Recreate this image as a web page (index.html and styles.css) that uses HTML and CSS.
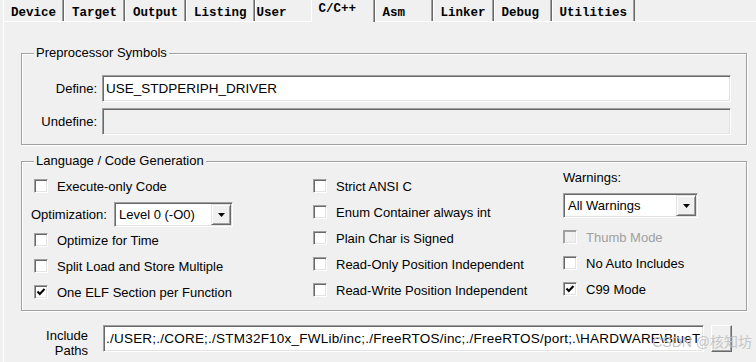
FILE: index.html
```html
<!DOCTYPE html>
<html>
<head>
<meta charset="utf-8">
<link rel="stylesheet" href="styles.css">
</head>
<body>
<div class="dialog">
  <div class="tabs">
    <div class="tab">Device</div>
    <div class="tab">Target</div>
    <div class="tab">Output</div>
    <div class="tab">Listing</div>
    <div class="tab tab-user">User</div>
    <div class="tab active">C/C++</div>
    <div class="tab">Asm</div>
    <div class="tab">Linker</div>
    <div class="tab">Debug</div>
    <div class="tab">Utilities</div>
  </div>
  <div class="page">
    <fieldset class="group pre">
      <legend>Preprocessor Symbols</legend>
      <div class="pre-grid">
        <div class="fl">Define:</div>
        <div class="edit">USE_STDPERIPH_DRIVER</div>
        <div class="fl">Undefine:</div>
        <div class="edit disabled"></div>
      </div>
    </fieldset>
    <fieldset class="group lang">
      <legend>Language / Code Generation</legend>
      <div class="cols">
        <div class="col c1">
          <div class="cb"><span class="box"></span><span>Execute-only Code</span></div>
          <div class="opt-row">
            <span class="opt-label">Optimization:</span>
            <div class="combo opt-combo">
              <span class="val">Level 0 (-O0)</span>
              <span class="drop"><svg width="7" height="4" viewBox="0 0 7 4"><polygon points="0,0 7,0 3.5,4" fill="#000"/></svg></span>
            </div>
          </div>
          <div class="cb"><span class="box"></span><span>Optimize for Time</span></div>
          <div class="cb"><span class="box"></span><span>Split Load and Store Multiple</span></div>
          <div class="cb"><span class="box"><svg width="12" height="12" viewBox="0 0 12 12"><polyline points="2.5,5.5 4.8,8 9.5,3" fill="none" stroke="#000" stroke-width="2"/></svg></span><span>One ELF Section per Function</span></div>
        </div>
        <div class="col c2">
          <div class="cb"><span class="box"></span><span>Strict ANSI C</span></div>
          <div class="cb"><span class="box"></span><span>Enum Container always int</span></div>
          <div class="cb"><span class="box"></span><span>Plain Char is Signed</span></div>
          <div class="cb"><span class="box"></span><span>Read-Only Position Independent</span></div>
          <div class="cb"><span class="box"></span><span>Read-Write Position Independent</span></div>
        </div>
        <div class="col c3">
          <div class="warn-label">Warnings:</div>
          <div class="combo warn-combo">
            <span class="val">All Warnings</span>
            <span class="drop"><svg width="7" height="4" viewBox="0 0 7 4"><polygon points="0,0 7,0 3.5,4" fill="#000"/></svg></span>
          </div>
          <div class="c3-checks">
            <div class="cb disabled"><span class="box"></span><span>Thumb Mode</span></div>
            <div class="cb"><span class="box"></span><span>No Auto Includes</span></div>
            <div class="cb"><span class="box"><svg width="12" height="12" viewBox="0 0 12 12"><polyline points="2.5,5.5 4.8,8 9.5,3" fill="none" stroke="#000" stroke-width="2"/></svg></span><span>C99 Mode</span></div>
          </div>
        </div>
      </div>
    </fieldset>
    <div class="inc-row">
      <div class="inc-label">Include<br>Paths</div>
      <div class="edit inc">./USER;./CORE;./STM32F10x_FWLib/inc;./FreeRTOS/inc;./FreeRTOS/port;.\HARDWARE\BlueT</div>
      <div class="btn"></div>
    </div>
  </div>
  <div class="watermark">CSDN @核知坊</div>
</div>
</body>
</html>
```
FILE: styles.css
```css
* { box-sizing: border-box; }
html, body { margin: 0; padding: 0; }
body {
  width: 756px;
  height: 362px;
  overflow: hidden;
  background: #f0f0f0;
  font-family: "Liberation Sans", Arial, sans-serif;
  font-size: 13px;
  color: #000;
}
.dialog { position: relative; width: 756px; height: 362px; }

/* tabs */
.tabs { display: flex; height: 21px; padding-left: 3px; }
.tab {
  height: 21px;
  min-width: 58px;
  padding: 7px 7px 0;
  border-left: 1px solid #fff;
  border-right: 1px solid #696969;
  box-shadow: inset -1px 0 #a0a0a0;
  font-family: "Liberation Mono", "Courier New", monospace;
  font-weight: bold;
  font-size: 12.5px;
  line-height: 13px;
  white-space: nowrap;
  background: #f0f0f0;
}
.tab-user { padding-left: 1px; }
.tab.active {
  position: relative;
  z-index: 1;
  height: 22px;
  min-width: 64px;
  margin-left: -2px;
  padding-top: 3px;
}

/* page */
.page {
  margin-left: 3px;
  height: 341px;
  border-top: 1px solid #fff;
  border-left: 1px solid #fff;
  padding: 23px 9px 0 0;
}
.group {
  margin: 0 0 0 17px;
  padding: 0;
  min-width: 0;
  border: 1px solid #a0a0a0;
  box-shadow: inset 1px 1px #fff, 1px 1px #fff;
}
.group legend {
  margin-left: 12px;
  padding: 0 2px;
  line-height: 16px;
  background: #f0f0f0;
}
.pre-grid {
  display: grid;
  grid-template-columns: 75px 1fr;
  column-gap: 5px;
  row-gap: 6px;
  align-items: center;
  padding: 14px 15px 9px 0;
}
.fl { text-align: right; }
.edit {
  height: 27px;
  background: #fff;
  border: 1px solid;
  border-color: #a0a0a0 #fff #fff #a0a0a0;
  box-shadow: inset 1px 1px #696969, inset -1px -1px #e3e3e3;
  padding: 0 3px;
  font-size: 13.5px;
  line-height: 25px;
  white-space: nowrap;
  overflow: hidden;
}
.edit.disabled { background: #f0f0f0; }

/* language group */
.lang { margin-top: 8px; }
.cols { display: flex; padding: 0 0 5px 9px; }
.col { display: flex; flex-direction: column; }
.c1 { width: 282px; padding-top: 4px; }
.c2 { width: 250px; padding-top: 4px; }
.c3 { width: 150px; padding-top: 1px; }
.cb { display: flex; align-items: center; height: 26px; white-space: nowrap; }
.c1 .cb { padding-left: 3px; }
.box {
  flex: none;
  width: 14px;
  height: 14px;
  margin-right: 9px;
  background: #fff;
  border: 1px solid;
  border-color: #a0a0a0 #fff #fff #a0a0a0;
  box-shadow: inset 1px 1px #696969, inset -1px -1px #e3e3e3;
  display: flex;
}
.box svg { display: block; }
.cb.disabled { color: #a0a0a0; }
.cb.disabled .box { background: #f0f0f0; box-shadow: inset 1px 1px #a0a0a0, inset -1px -1px #e3e3e3; }

.opt-row { display: flex; align-items: center; height: 25px; margin-top: 3px; }
.opt-label { width: 83px; }
.combo {
  display: flex;
  height: 25px;
  padding: 1px;
  background: #fff;
  border: 1px solid;
  border-color: #a0a0a0 #fff #fff #a0a0a0;
  box-shadow: inset 1px 1px #696969, inset -1px -1px #e3e3e3;
}
.opt-combo { width: 119px; }
.warn-combo { width: 135px; margin-top: 7px; }
.combo .val { flex: 1; padding-left: 3px; line-height: 21px; white-space: nowrap; }
.combo .drop {
  flex: none;
  width: 20px;
  display: flex;
  align-items: center;
  justify-content: center;
  background: #f0f0f0;
  border: 1px solid;
  border-color: #e3e3e3 #696969 #696969 #e3e3e3;
  box-shadow: inset 1px 1px #fff, inset -1px -1px #a0a0a0;
}
.warn-label { height: 16px; line-height: 16px; }
.c3-checks { margin-top: 6px; }

/* include paths */
.inc-row { display: flex; margin-top: 14px; }
.inc-label {
  width: 84px;
  margin-right: 15px;
  padding-top: 3px;
  text-align: right;
  line-height: 15px;
}
.edit.inc { width: 601px; padding-left: 2px; letter-spacing: 0.22px; }
.btn {
  width: 21px;
  height: 27px;
  margin-left: 7px;
  background: #f0f0f0;
  border: 1px solid;
  border-color: #fff #696969 #696969 #fff;
  box-shadow: inset -1px -1px #a0a0a0;
}

.watermark {
  position: absolute;
  right: 4px;
  top: 333px;
  font-family: "Liberation Sans", "Noto Sans CJK SC", sans-serif;
  font-size: 14px;
  line-height: 18px;
  color: #c6c6c6;
  white-space: nowrap;
}
```
